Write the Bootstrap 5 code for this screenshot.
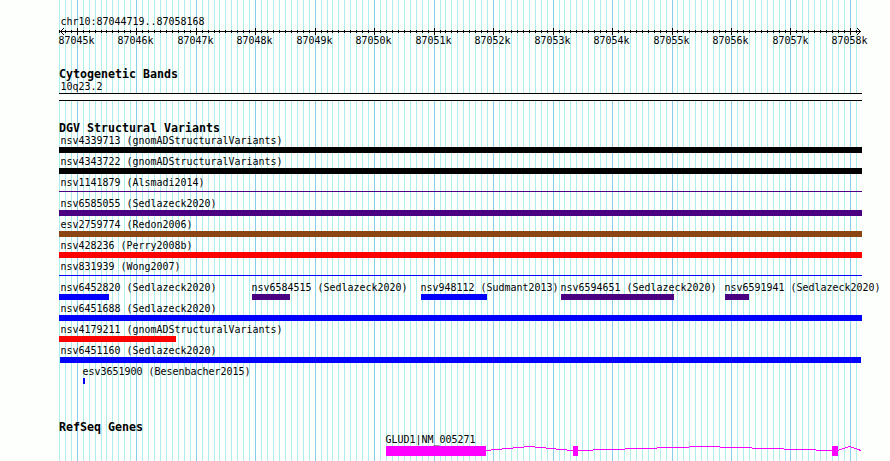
<!DOCTYPE html>
<html lang="en">
<head>
    <meta charset="utf-8">
    <title>chr10:87044719..87058168</title>
    <link href="https://cdn.jsdelivr.net/npm/bootstrap@5.3.0/dist/css/bootstrap.min.css" rel="stylesheet">
    <style>
        body { background: #fdfffc; color: #000; font-family: "DejaVu Sans Mono", monospace; font-size: 10.5px; line-height: 13px; }
        .browser { width: 890px; height: 461px; padding-left: 59px; }
        .gridlines { z-index: -1; }
        svg { display: block; shape-rendering: crispEdges; }
        /* 6px character cell for labels, 7px for headings */
        .lbl { display: block; height: 13px; line-height: 13px; padding-left: 1.5px; white-space: pre; transform: scaleX(.9492); transform-origin: 0 0; }
        .heading { height: 12px; margin: 0; font-size: 11.63px; line-height: 12px; font-weight: 700; white-space: pre; }
        .region { padding-top: 15px; height: 28px; }
        .scale-labels { height: 13px; margin-left: -1px; }
        .scale-labels span { flex: 0 0 59.48px; width: 59.48px; }
        .scale-labels .lbl { padding-left: .5px; line-height: 10px; }
        .cyto { margin-top: 20px; }
        .band { width: 803px; height: 8px; border: solid #000; border-width: 1px 0; background: #fdfffc; }
        .dgv { margin-top: 21px; }
        .feature-row { height: 21px; }
        .feature { flex: none; }
        .bar { height: 6px; }
        .thin { height: 1px; margin-top: 2px; }
        .black { background: #000; }
        .indigo { background: #4b0082; }
        .brown { background: #8b4513; }
        .red { background: #f00; }
        .blue { background: #00f; }
        .refseq { margin-top: 35px; }
        .gene-label { margin-left: 326px; }
        .gene-label .lbl { padding-left: .5px; }
    </style>
    <script src="https://cdn.jsdelivr.net/npm/bootstrap@5.3.0/dist/js/bootstrap.bundle.min.js"></script>
</head>
<body>
<div class="browser position-relative overflow-hidden">
    <svg id="gridlines" class="gridlines position-absolute top-0 start-0" width="890" height="461"></svg>

    <!-- Scale -->
    <div class="region"><span class="lbl">chr10:87044719..87058168</span></div>
    <svg id="ruler" width="803" height="7">
        <path d="M1 3h801v1H1zM2 2h1v3h-1zM3 1h1v1h-1zM3 5h1v1h-1zM4 0h1v1h-1zM4 6h1v1h-1zM800 2h1v3h-1zM799 1h1v1h-1zM799 5h1v1h-1zM798 0h1v1h-1zM798 6h1v1h-1z"/>
    </svg>
    <div id="scaleLabels" class="scale-labels d-flex"></div>

    <!-- Cytogenetic bands -->
    <section class="cyto">
        <h2 class="heading">Cytogenetic Bands</h2>
        <span class="lbl">10q23.2</span>
        <div class="band"></div>
    </section>

    <!-- Structural variants -->
    <section class="dgv">
        <h2 class="heading">DGV Structural Variants</h2>
        <div id="variants"></div>
    </section>

    <!-- Genes -->
    <section class="refseq">
        <h2 class="heading">RefSeq Genes</h2>
        <div class="gene-label"><span class="lbl">GLUD1|NM_005271</span></div>
        <svg width="803" height="15" fill="#f0f">
            <path d="M327 0h100v10h-100zM514 0h5v10h-5zM773 0h6v10h-6z"/>
            <path d="M427 4h5v1h-5zM432 3h11v1h-11zM443 2h11v1h-11zM454 1h11v1h-11zM465 0h11v1h-11zM476 1h11v1h-11zM487 2h10v1h-10zM497 3h11v1h-11zM508 4h6v1h-6z"/>
            <path d="M519 4h15v1h-15zM534 3h32v1h-32zM566 2h32v1h-32zM598 1h32v1h-32zM630 0h31v1h-31zM661 1h32v1h-32zM693 2h32v1h-32zM725 3h32v1h-32zM757 4h16v1h-16z"/>
            <path d="M779 4h1v1h-1zM780 3h3v1h-3zM783 2h3v1h-3zM786 1h3v1h-3zM789 0h3v1h-3zM792 1h3v1h-3zM795 2h3v1h-3zM798 3h3v1h-3zM800 4h2v1h-2z"/>
        </svg>
    </section>
</div>

<script>
    const SVG = "http://www.w3.org/2000/svg";

    function addRect(svg, x, y, w, h, fill) {
        const rect = document.createElementNS(SVG, "rect");
        const attrs = { x: x, y: y, width: w, height: h, fill: fill };
        for (const key in attrs) rect.setAttribute(key, attrs[key]);
        svg.appendChild(rect);
    }

    // one line per 100 bp, darker at every 1 kb
    for (let i = -3; i <= 131; i++) {
        const x = Math.floor(77.22 + i * 5.948);
        const major = i % 10 === 0;
        addRect(document.getElementById("gridlines"), x, 0, 1, 461, major ? "#87ceeb" : "#afeeee");
        addRect(document.getElementById("ruler"), x - 59, major ? 0 : 2, 1, major ? 7 : 3, "#000");
    }

    for (let kb = 87045; kb <= 87058; kb++) {
        document.getElementById("scaleLabels").insertAdjacentHTML("beforeend",
            `<span><span class="lbl">${kb}k</span></span>`);
    }

    // [label, start, end, colour, thin]
    const rows = [
        [["nsv4339713 (gnomADStructuralVariants)", 0, 803, "black"]],
        [["nsv4343722 (gnomADStructuralVariants)", 0, 803, "black"]],
        [["nsv1141879 (Alsmadi2014)", 0, 803, "indigo", true]],
        [["nsv6585055 (Sedlazeck2020)", 0, 803, "indigo"]],
        [["esv2759774 (Redon2006)", 0, 803, "brown"]],
        [["nsv428236 (Perry2008b)", 0, 803, "red"]],
        [["nsv831939 (Wong2007)", 0, 803, "blue", true]],
        [
            ["nsv6452820 (Sedlazeck2020)", 0, 50, "blue"],
            ["nsv6584515 (Sedlazeck2020)", 193, 231, "indigo"],
            ["nsv948112 (Sudmant2013)", 362, 428, "blue"],
            ["nsv6594651 (Sedlazeck2020)", 502, 615, "indigo"],
            ["nsv6591941 (Sedlazeck2020)", 666, 690, "indigo"]
        ],
        [["nsv6451688 (Sedlazeck2020)", 0, 803, "blue"]],
        [["nsv4179211 (gnomADStructuralVariants)", 0, 117, "red"]],
        [["nsv6451160 (Sedlazeck2020)", 1, 802, "blue"]],
        [["esv3651900 (Besenbacher2015)", 24, 26, "blue"]]
    ];

    rows.forEach(row => {
        let html = `<div class="feature-row d-flex" style="padding-left:${row[0][1]}px">`;
        row.forEach((f, i) => {
            const next = i + 1 < row.length ? row[i + 1][1] : 831;
            // labels of features inside the region start before the bar
            const shift = f[1] > 0 ? `margin-left:${f[1] > 1 ? -2 : -1}px` : "";
            html += `<div class="feature" style="width:${next - f[1]}px">
                <span class="lbl" style="${shift}">${f[0]}</span>
                <div class="${f[4] ? "thin" : "bar"} ${f[3]}" style="width:${f[2] - f[1]}px"></div>
            </div>`;
        });
        document.getElementById("variants").insertAdjacentHTML("beforeend", html + "</div>");
    });
</script>
</body>
</html>
